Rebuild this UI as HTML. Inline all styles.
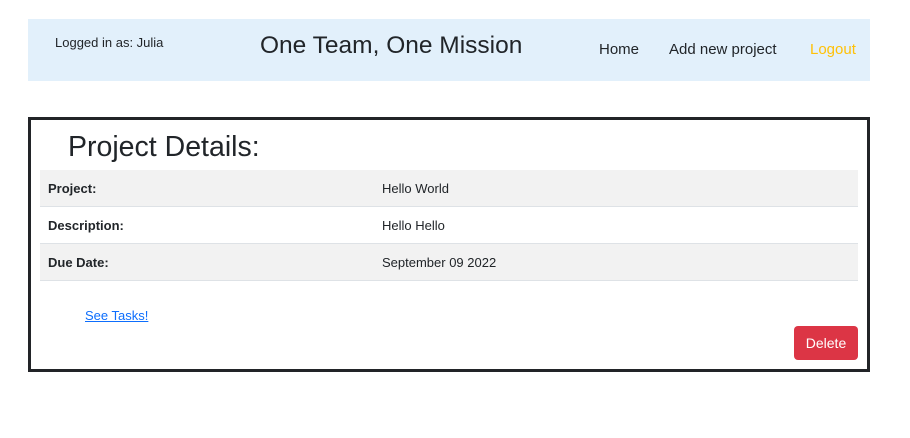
<!DOCTYPE html>
<html><head><style>
body{margin:0;width:910px;height:438px;background:#fff;font-family:"Liberation Sans",sans-serif;color:#212529;position:relative;overflow:hidden}
.nav{position:absolute;left:28px;top:19px;width:842px;height:62px;background:#e2f0fb}
.abs{position:absolute;white-space:nowrap}
.card{position:absolute;left:28px;top:117px;width:836px;height:249px;border:3px solid #222428}
.row{position:absolute;left:9px;width:818px;height:36px;border-bottom:1px solid #dee2e6;font-size:13px}
.row b{position:absolute;left:8px;top:11px}
.row span{position:absolute;left:342px;top:11px}
</style></head><body>
<div class="nav">
<div class="abs" style="left:27px;top:16px;font-size:13px">Logged in as: Julia</div>
<div class="abs" style="left:232px;top:13px;font-size:24.5px">One Team, One Mission</div>
<div class="abs" style="left:571px;top:22px;font-size:15px">Home</div>
<div class="abs" style="left:641px;top:22px;font-size:15px">Add new project</div>
<div class="abs" style="left:782px;top:22px;font-size:15px;color:#ffc107">Logout</div>
</div>
<div class="card">
<div class="abs" style="left:37px;top:11px;font-size:28.5px">Project Details:</div>
<div class="row" style="top:50px;background:#f2f2f2"><b>Project:</b><span>Hello World</span></div>
<div class="row" style="top:87px"><b>Description:</b><span>Hello Hello</span></div>
<div class="row" style="top:124px;background:#f2f2f2"><b>Due Date:</b><span>September 09 2022</span></div>
<div class="abs" style="left:54px;top:188px;font-size:13px;color:#0d6efd;text-decoration:underline">See Tasks!</div>
<div class="abs" style="left:763px;top:206px;width:64px;height:34px;background:#dc3545;border-radius:4px;color:#fff;font-size:14px;text-align:center;line-height:34px">Delete</div>
</div>
</body></html>
